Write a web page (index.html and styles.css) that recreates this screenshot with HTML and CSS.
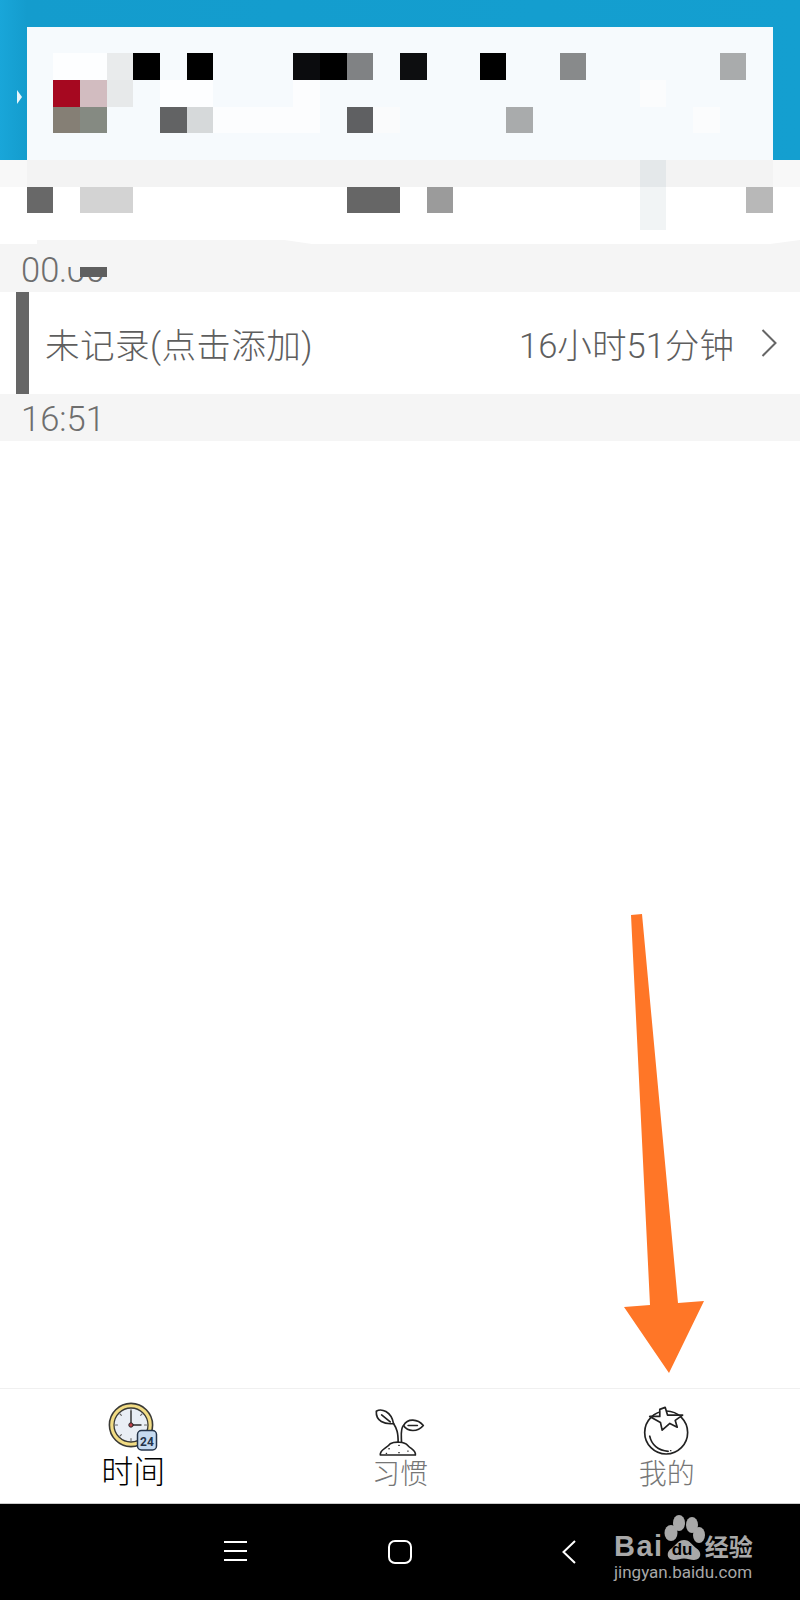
FILE: index.html
```html
<!DOCTYPE html>
<html lang="zh-CN">
<head>
<meta charset="utf-8">
<title>时间</title>
<link rel="stylesheet" href="styles.css">
</head>
<body>
<div class="app">
  <header class="top">
    <div class="top-blue"><span class="top-caret"></span></div>
    <div class="top-strip"></div>
    <div class="mosaic">
      <i class="c" style="grid-area:1/1/7/29;background:#f6fafd"></i>
      <i class="c" style="grid-area:6/1/7/29;background:#f3f3f3"></i>
      <i class="c" style="grid-area:2/2/3/4;background:#fdfeff"></i>
      <i class="c" style="grid-area:2/4/3/5;background:#e9ebec"></i>
      <i class="c" style="grid-area:2/5/3/6;background:#000"></i>
      <i class="c" style="grid-area:2/7/3/8;background:#000"></i>
      <i class="c" style="grid-area:2/11/3/12;background:#0b0c0e"></i>
      <i class="c" style="grid-area:2/12/3/13;background:#000"></i>
      <i class="c" style="grid-area:2/13/3/14;background:#808284"></i>
      <i class="c" style="grid-area:2/15/3/16;background:#0d0e10"></i>
      <i class="c" style="grid-area:2/18/3/19;background:#000"></i>
      <i class="c" style="grid-area:2/21/3/22;background:#888a8b"></i>
      <i class="c" style="grid-area:2/27/3/28;background:#a9abac"></i>
      <i class="c" style="grid-area:3/2/4/3;background:#a60820"></i>
      <i class="c" style="grid-area:3/3/4/4;background:#d2bcc0"></i>
      <i class="c" style="grid-area:3/4/4/5;background:#e7e9ea"></i>
      <i class="c" style="grid-area:3/6/4/8;background:#fdfeff"></i>
      <i class="c" style="grid-area:3/11/4/12;background:#fcfdfe"></i>
      <i class="c" style="grid-area:3/24/4/25;background:#fbfcfd"></i>
      <i class="c" style="grid-area:4/2/5/3;background:#857f75"></i>
      <i class="c" style="grid-area:4/3/5/4;background:#858a82"></i>
      <i class="c" style="grid-area:4/6/5/7;background:#626364"></i>
      <i class="c" style="grid-area:4/7/5/8;background:#d6d9da"></i>
      <i class="c" style="grid-area:4/8/5/12;background:#fcfdfe"></i>
      <i class="c" style="grid-area:4/13/5/14;background:#5f6062"></i>
      <i class="c" style="grid-area:4/14/5/15;background:#fafbfc"></i>
      <i class="c" style="grid-area:4/19/5/20;background:#a9abac"></i>
      <i class="c" style="grid-area:4/26/5/27;background:#fbfcfd"></i>
      <i class="c" style="grid-area:6/24/7/25;background:#e4e8ea"></i>
      <i class="c" style="grid-area:7/1/8/2;background:#686868"></i>
      <i class="c" style="grid-area:7/3/8/5;background:#d3d3d3"></i>
      <i class="c" style="grid-area:7/13/8/15;background:#666"></i>
      <i class="c" style="grid-area:7/16/8/17;background:#9b9b9b"></i>
      <i class="c" style="grid-area:7/24/9/25;background:#f1f4f5"></i>
      <i class="c" style="grid-area:7/28/8/29;background:#b8b8b8"></i>
    </div>
    <span class="top-fade top-fade-l"></span>
    <span class="top-fade top-fade-r"></span>
  </header>

  <div class="stamp stamp-first">
    <span>00:00</span>
    <span class="stamp-erase"></span>
    <span class="stamp-blot"></span>
  </div>

  <div class="entry">
    <span class="entry-bar"></span>
    <span class="entry-title">未记录(点击添加)</span>
    <span class="entry-time">16小时51分钟</span>
    <svg class="entry-go" viewBox="0 0 16 28"><path d="M1.5 1l13 13-13 13"/></svg>
  </div>

  <div class="stamp stamp-last"><span>16:51</span></div>

  <main class="blank"></main>

  <nav class="tabs">
    <a class="tab tab-on">
      <svg class="ico ico-clock" viewBox="0 0 50 50">
        <circle cx="23" cy="23" r="21.6" fill="#f2dc84" stroke="#3a3a36" stroke-width="1.6"/>
        <circle cx="23" cy="23" r="17" fill="#e9eef5" stroke="#3a3a36" stroke-width="1.3"/>
        <path d="M23 9v14M23 23h10" fill="none" stroke="#2c2c2c" stroke-width="1.4"/>
        <path d="M23 7.500v2M38.500 23h-2M23 38.500v-2M7.500 23h2M34 12l-1.400 1.400M12 12l1.400 1.400M12 34l1.400-1.400" stroke="#666" stroke-width="1.1"/>
        <circle cx="23" cy="23" r="2.200" fill="#c0404a" stroke="#2c2c2c" stroke-width="1"/>
        <rect x="29.500" y="28.500" width="19" height="19.500" rx="4" fill="#c6daf0" stroke="#24344a" stroke-width="1.500"/>
        <text x="39" y="43.500" text-anchor="middle" class="ico-clock-num">24</text>
      </svg>
      <span>时间</span>
    </a>
    <a class="tab">
      <svg class="ico ico-sprout" viewBox="70 40 160 155">
        <path d="M80 55C95 45 125 55 132 92 105 95 78 85 80 55Z"/>
        <path d="M96 66l26 21"/>
        <path d="M162 98C175 75 205 78 222 98 205 118 175 118 162 98Z"/>
        <path d="M176 98h28"/>
        <path d="M132 92C142 108 146 118 146 150M162 98C152 106 156 130 156 150"/>
        <path d="M92 187C90 170 110 168 122 153 135 146 165 146 175 158 185 170 200 172 198 187Z"/>
        <path d="M118 168h1M148 158h1M148 180h1M110 182h1M175 175h1" stroke-width="4"/>
      </svg>
      <span>习惯</span>
    </a>
    <a class="tab">
      <svg class="ico ico-tomato" viewBox="70 45 140 146">
        <circle cx="139" cy="124" r="64"/>
        <path class="ico-calyx" d="M120 55L136 49 143 72 188 72 166 88 172 108 150 97 127 117 122 94 90 76 120 76Z"/>
        <path d="M90 135C95 160 115 178 145 180"/>
        <path d="M152 178h1" stroke-width="4"/>
      </svg>
      <span>我的</span>
    </a>
  </nav>

  <footer class="sysbar">
    <svg class="sys sys-menu" viewBox="0 0 23 20"><path d="M0 1h23M0 10h23M0 19h23"/></svg>
    <svg class="sys sys-home" viewBox="0 0 24 24"><rect x="1" y="1" width="22" height="22" rx="6"/></svg>
    <svg class="sys sys-back" viewBox="0 0 14 24"><path d="M13 1L1.500 12 13 23"/></svg>
  </footer>

  <svg class="pointer" viewBox="0 0 800 1600"><path d="M631 915L642 914 678 1303 704 1301 669 1373 624 1307 650 1305Z"/></svg>

  <div class="mark">
    <div class="mark-head">
      <span class="mark-bai">Bai</span>
      <span class="mark-paw">
        <svg viewBox="0 0 41 45"><ellipse cx="7" cy="18" rx="6.500" ry="8"/><ellipse cx="15" cy="8" rx="6" ry="8"/><ellipse cx="28" cy="10" rx="6" ry="8"/><ellipse cx="35" cy="20" rx="6" ry="8"/><path d="M20 25C26 25 28 30 32 33 38 36 38 45 30 45 26 45 24 43.500 20 43.500 16 43.500 14 45 10 45 2 45 2 36 8 33 12 30 14 25 20 25Z"/></svg>
        <span class="mark-du">du</span>
      </span>
      <span class="mark-jy">经验</span>
    </div>
    <div class="mark-url">jingyan.baidu.com</div>
  </div>
</div>
</body>
</html>
```

FILE: styles.css
```css
* { box-sizing: border-box; }
html, body { margin: 0; padding: 0; background: #fff; }
body { width: 800px; height: 1600px; overflow: hidden; font-family: Roboto, "Noto Sans CJK SC", sans-serif; font-weight: 300; }
.app { position: relative; width: 800px; height: 1600px; display: flex; flex-direction: column; }

/* Header with its pixelated card */
.top { position: relative; flex: 0 0 244px; background: #fff; }
.top-blue { position: relative; height: 160px; background: linear-gradient(90deg, #19a6d9 0, #149ccd 27px, #149fd0 100%); }
.top-caret { position: absolute; left: 17px; top: 90px; border-left: 5px solid #e8f6fb; border-top: 7px solid transparent; border-bottom: 7px solid transparent; }
.top-strip { height: 27px; background: #f8f8f8; }
.mosaic { position: absolute; left: 26.67px; top: 26.67px; display: grid; grid-template-columns: repeat(28, 26.67px); grid-template-rows: repeat(7, 26.67px) 17px; }
.c { display: block; }
.top-fade { position: absolute; bottom: 0; height: 4px; background: #f5f5f5; }
.top-fade-l { left: 37px; width: 275px; clip-path: polygon(0 0, 90% 0, 100% 100%, 0 100%); }
.top-fade-r { right: 0; width: 30px; clip-path: polygon(0 100%, 100% 0, 100% 100%); }

/* Time stamps */
.stamp { position: relative; display: flex; align-items: center; padding: 3px 0 0 21px; background: #f5f5f5; color: #6e6e6e; font-size: 34.500px; }
.stamp-first { flex: 0 0 48px; }
.stamp-last { flex: 0 0 47px; }
.stamp-erase { position: absolute; left: 60px; top: 8px; width: 47px; height: 15px; background: #f5f5f5; }
.stamp-blot { position: absolute; left: 80px; top: 23px; width: 27px; height: 10px; background: #5f5f5f; }

/* Day entry */
.entry { flex: 0 0 102px; display: flex; align-items: center; padding-left: 16px; color: #5e5e5e; font-size: 34.600px; background: #fff; }
.entry-bar { align-self: stretch; width: 13px; margin-right: 16px; background: #666; }
.entry-title { flex: 1; letter-spacing: 0.400px; }
.entry-go { width: 16px; height: 28px; margin: 0 23px 0 27px; fill: none; stroke: #666; stroke-width: 2; }

.blank { flex: 1; background: #fff; }

/* Bottom tabs */
.tabs { flex: 0 0 115px; display: grid; grid-template-columns: repeat(3, 1fr); border-top: 1px solid #f0f0f0; background: #fff; }
.tab { display: flex; flex-direction: column; align-items: center; color: #767676; font-size: 28px; line-height: 34px; padding-top: 17px; }
.tab-on { color: #000; font-size: 32px; line-height: 36px; padding-top: 13px; }
.tab-on span { position: relative; top: 2px; }
.ico { display: block; fill: #fff; stroke: #222; stroke-width: 5; stroke-linejoin: round; stroke-linecap: round; }
.ico-clock { width: 50px; height: 50px; }
.ico-clock-num { font: 700 12px Roboto, sans-serif; fill: #24344a; stroke: none; }
.ico-sprout { width: 53px; height: 52px; }
.ico-sprout path:nth-child(2), .ico-sprout path:nth-child(4) { fill: none; }
.ico-tomato { width: 47px; height: 49px; margin-bottom: 3px; }
.ico-tomato path { fill: none; }
.ico-tomato .ico-calyx { fill: #fff; }

/* System navigation */
.sysbar { position: relative; flex: 0 0 97px; background: #000; border-top: 1px solid #ccc; }
.sys { position: absolute; fill: none; stroke: #fff; stroke-width: 2; }
.sys-menu { left: 224px; top: 37px; width: 23px; height: 20px; }
.sys-home { left: 388px; top: 36px; width: 24px; height: 24px; }
.sys-back { left: 562px; top: 36px; width: 14px; height: 24px; }

/* Annotation arrow */
.pointer { position: absolute; left: 0; top: 0; width: 800px; height: 1600px; pointer-events: none; }
.pointer path { fill: #ff7627; }

/* Watermark */
.mark { position: absolute; left: 614px; top: 1515px; width: 144px; color: #a8a8a8; }
.mark-head { display: flex; align-items: flex-end; height: 45px; }
.mark-bai { flex: 0 0 49px; font: 700 29px/27px "Liberation Sans", sans-serif; letter-spacing: 1.500px; }
.mark-paw { position: relative; flex: 0 0 41px; height: 45px; }
.mark-paw svg { width: 41px; height: 45px; fill: #a8a8a8; display: block; }
.mark-du { position: absolute; left: 8px; bottom: 2px; font: 700 17px/16px "Liberation Sans", sans-serif; color: #000; }
.mark-jy { font: 700 24px/28px "Noto Sans CJK SC", sans-serif; white-space: nowrap; }
.mark-url { font: 400 17px/20px Roboto, sans-serif; margin-top: 2px; white-space: nowrap; }
```
